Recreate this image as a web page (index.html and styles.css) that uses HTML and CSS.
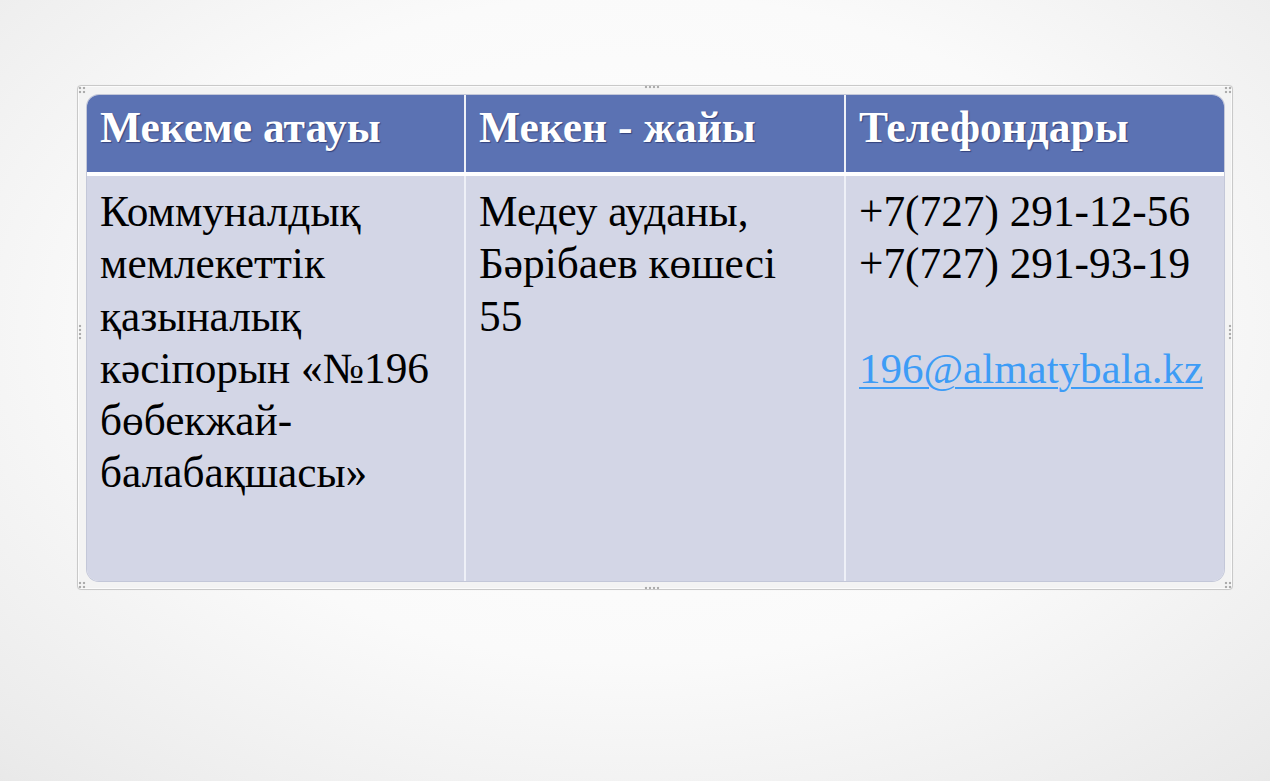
FILE: index.html
```html
<!DOCTYPE html>
<html lang="kk">
<head>
<meta charset="utf-8">
<title>Мекеме</title>
<link rel="stylesheet" href="styles.css">
</head>
<body>
<div class="slide">
  <div class="frame">
    <span class="handle h-tl"></span>
    <span class="handle h-tr"></span>
    <span class="handle h-bl"></span>
    <span class="handle h-br"></span>
    <span class="handle h-t"></span>
    <span class="handle h-b"></span>
    <span class="handle h-l"></span>
    <span class="handle h-r"></span>
    <div class="table">
      <div class="row head">
        <div class="cell">Мекеме атауы</div>
        <div class="cell">Мекен - жайы</div>
        <div class="cell">Телефондары</div>
      </div>
      <div class="row body">
        <div class="cell">Коммуналдық мемлекеттік қазыналық кәсіпорын «№196 бөбекжай-балабақшасы»</div>
        <div class="cell narrow">Медеу ауданы, Бәрібаев көшесі 55</div>
        <div class="cell">+7(727) 291-12-56<br>+7(727) 291-93-19<br><br><a class="mail" href="#">196@almatybala.kz</a></div>
      </div>
    </div>
  </div>
</div>
</body>
</html>
```
FILE: styles.css
```css
html, body {
  margin: 0;
  padding: 0;
}
body {
  width: 1270px;
  height: 781px;
  overflow: hidden;
  background: radial-gradient(ellipse 90% 95% at 50% 42%, #ffffff 0%, #fafafa 45%, #eaeaea 80%, #dedede 100%);
  font-family: "Liberation Serif", "Times New Roman", serif;
}
.slide {
  padding: 85px 0 0 77px;
}
.frame {
  position: relative;
  width: 1156px;
  height: 505px;
  box-sizing: border-box;
  border: 1px solid #c9c9c9;
  border-radius: 4px;
  background: #f3f3f3;
  padding: 9px 8px 8px 9px;
  box-shadow: inset 0 0 0 1px #fbfbfb, 0 0 1px rgba(0,0,0,0.08);
}
.handle {
  position: absolute;
  width: 10px;
  height: 10px;
  background-image: radial-gradient(circle, #9a9a9a 0 1.2px, transparent 1.6px);
  background-size: 4px 4px;
  opacity: 0.8;
}
.h-tl { left: 0; top: 0; width: 8px; height: 8px; }
.h-tr { right: 0; top: 0; width: 8px; height: 8px; }
.h-bl { left: 0; bottom: 0; width: 8px; height: 8px; }
.h-br { right: 0; bottom: 0; width: 8px; height: 8px; }
.h-t { top: -1px; left: 566px; width: 16px; height: 4px; }
.h-b { bottom: -1px; left: 566px; width: 16px; height: 4px; }
.h-l { left: 0; top: 238px; width: 4px; height: 16px; }
.h-r { right: 0; top: 238px; width: 4px; height: 16px; }
.table {
  height: 486px;
  width: 1137px;
  border-radius: 12px;
  overflow: hidden;
  display: flex;
  flex-direction: column;
  background: #d3d6e6;
  box-shadow: 0 0 0 1px #c3c7d8;
}
.row {
  display: grid;
  grid-template-columns: 377px 378px 1fr;
  column-gap: 2px;
  background: #eef0f7;
}
.head {
  height: 77px;
  border-bottom: 4px solid #ffffff;
}
.body {
  flex: 1;
}
.head .cell {
  background: #5b72b3;
  color: #ffffff;
  font-weight: bold;
  font-size: 43.5px;
  line-height: 44px;
  padding: 10px 0 0 13px;
  text-shadow: 1px 1px 1px rgba(20, 30, 80, 0.55);
}
.body .cell {
  background: #d3d6e6;
  color: #000000;
  font-size: 43.3px;
  line-height: 52.3px;
  padding: 9px 10px 0 13px;
}
.body .narrow {
  padding-right: 30px;
}
.mail {
  color: #3d9cf6;
  font-size: 43px;
  text-decoration: underline;
  text-decoration-thickness: 2px;
  text-underline-offset: 4px;
}
```
